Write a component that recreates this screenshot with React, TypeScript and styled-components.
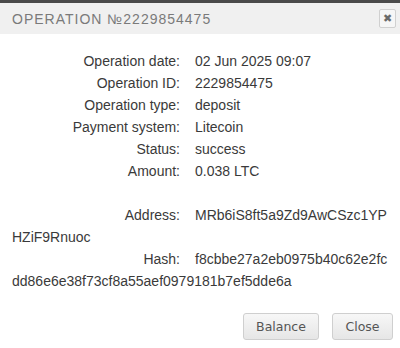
import styled, { createGlobalStyle } from 'styled-components';

const GlobalStyle = createGlobalStyle`
  html, body {
    margin: 0;
    padding: 0;
    background: #ffffff;
  }
`

const Dialog = styled.div`
  width: 400px;
  height: 348px;
  background: #ffffff;
  border-top: 3px solid #4a4a4a;
  box-sizing: border-box;
  display: flex;
  flex-direction: column;
`

const Header = styled.div`
  height: 31px;
  background: #f0f0f0;
  display: flex;
  align-items: center;
  justify-content: space-between;
  padding: 0 4px 0 12px;
`

const Title = styled.div`
  font-family: "Liberation Sans", Arial, sans-serif;
  font-size: 14px;
  letter-spacing: 1px;
  color: #7a7a7a;
  text-transform: uppercase;
`

const CloseX = styled.button`
  width: 17px;
  height: 19px;
  padding: 0;
  border: 1px solid #d0d0d0;
  border-radius: 2px;
  background: #f6f6f6;
  color: #6a6a6a;
  font-family: "DejaVu Sans", sans-serif;
  font-weight: bold;
  font-size: 11px;
  line-height: 17px;
  text-align: center;
`

const Body = styled.div`
  flex: 1;
  padding: 16px 12px 0 12px;
  font-family: "Liberation Sans", Arial, sans-serif;
  font-size: 14px;
  color: #3a3a3a;
`

const Line = styled.div<{ $gap?: boolean }>`
  line-height: 22px;
  margin-top: ${p => (p.$gap ? '22px' : '0')};
  word-break: break-all;
`

const Label = styled.span`
  display: inline-block;
  width: 168px;
  margin-right: 15px;
  text-align: right;
`

const Footer = styled.div`
  display: flex;
  justify-content: flex-end;
  gap: 13px;
  padding: 0 7px 8px 0;
`

const Button = styled.button<{ $w: number }>`
  width: ${p => p.$w}px;
  height: 27px;
  border: 1px solid #cfcfcf;
  border-radius: 3px;
  background: linear-gradient(#f7f7f7, #e6e6e6);
  color: #555555;
  font-family: "DejaVu Sans", Verdana, sans-serif;
  font-size: 12.5px;
  padding: 0;
`

const rows = [
  ['Operation date:', '02 Jun 2025 09:07'],
  ['Operation ID:', '2229854475'],
  ['Operation type:', 'deposit'],
  ['Payment system:', 'Litecoin'],
  ['Status:', 'success'],
  ['Amount:', '0.038 LTC'],
]

export default function App() {
  return (
    <Dialog>
      <GlobalStyle />
      <Header>
        <Title>Operation №2229854475</Title>
        <CloseX>✖</CloseX>
      </Header>
      <Body>
        {rows.map(([label, value]) => (
          <Line key={label}>
            <Label>{label}</Label>
            {value}
          </Line>
        ))}
        <Line $gap>
          <Label>Address:</Label>
          MRb6iS8ft5a9Zd9AwCSzc1YPHZiF9Rnuoc
        </Line>
        <Line>
          <Label>Hash:</Label>
          f8cbbe27a2eb0975b40c62e2fcdd86e6e38f73cf8a55aef0979181b7ef5dde6a
        </Line>
      </Body>
      <Footer>
        <Button $w={76}>Balance</Button>
        <Button $w={61}>Close</Button>
      </Footer>
    </Dialog>
  )
}
